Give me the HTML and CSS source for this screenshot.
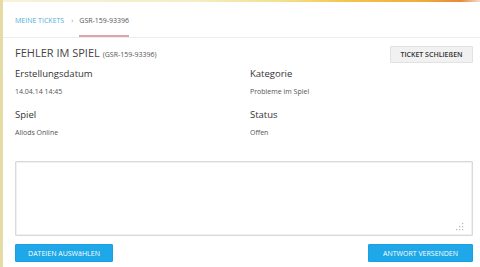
FILE: index.html
```html
<!DOCTYPE html>
<html lang="de">
<head>
<meta charset="utf-8">
<title>Ticket GSR-159-93396</title>
<link rel="stylesheet" href="styles.css">
</head>
<body>
<div class="page">
  <div class="topbar"></div>
  <nav class="crumbs">
    <a class="crumb link" href="#">MEINE TICKETS</a>
    <span class="sep">›</span>
    <span class="crumb current">GSR-159-93396</span>
  </nav>
  <div class="content">
    <div class="header">
      <h1 class="title">FEHLER IM SPIEL <small>(GSR-159-93396)</small></h1>
      <button class="btn btn-light">TICKET SCHLIEßEN</button>
    </div>
    <div class="fields">
      <div class="field">
        <div class="label">Erstellungsdatum</div>
        <div class="value">14.04.14 14:45</div>
      </div>
      <div class="field">
        <div class="label">Kategorie</div>
        <div class="value">Probleme im Spiel</div>
      </div>
      <div class="field">
        <div class="label">Spiel</div>
        <div class="value">Allods Online</div>
      </div>
      <div class="field">
        <div class="label">Status</div>
        <div class="value">Offen</div>
      </div>
    </div>
    <div class="reply">
      <textarea class="reply-input"></textarea>
      <svg class="grip" width="9" height="9" viewBox="0 0 9 9">
        <rect x="7" y="1" width="1.2" height="1.2" fill="#b5b5b5"/>
        <rect x="4" y="4" width="1.2" height="1.2" fill="#b5b5b5"/>
        <rect x="7" y="4" width="1.2" height="1.2" fill="#b5b5b5"/>
        <rect x="1" y="7" width="1.2" height="1.2" fill="#b5b5b5"/>
        <rect x="4" y="7" width="1.2" height="1.2" fill="#b5b5b5"/>
        <rect x="7" y="7" width="1.2" height="1.2" fill="#b5b5b5"/>
      </svg>
    </div>
    <div class="actions">
      <button class="btn btn-blue btn-files">DATEIEN AUSWäHLEN</button>
      <button class="btn btn-blue btn-send">ANTWORT VERSENDEN</button>
    </div>
  </div>
</div>
</body>
</html>
```

FILE: styles.css
```css
* { box-sizing: border-box; }
html, body { margin: 0; padding: 0; background: #fff; }
body {
  font-family: "Open Sans", "Liberation Sans", sans-serif;
  color: #333;
}
.page {
  border-left: 3px solid #e4dca4;
  min-height: 267px;
}
.topbar {
  height: 2px;
  background: linear-gradient(to right, #f7f2da 0%, #f4edc6 40%, #f2e18e 58%, #f3c54e 72%, #f0aa3c 88%, #e8893a 96%, #f3dccb 100%);
}
.crumbs {
  display: flex;
  align-items: stretch;
  padding: 0 12px;
  border-bottom: 1px solid #ededed;
  font-size: 7px;
  line-height: 10px;
}
.crumb {
  padding: 14px 0 9px;
  border-bottom: 2px solid transparent;
  text-decoration: none;
}
.crumb.link { color: #52aed8; }
.crumb.current { color: #555; border-bottom-color: #dfa3a8; }
.sep {
  padding: 14px 6px 9px 7px;
  color: #999;
}
.content {
  padding: 0 7px 0 12px;
}
.header {
  display: flex;
  justify-content: space-between;
  align-items: flex-start;
  margin-top: 7px;
}
.title {
  margin: 0;
  font-size: 11px;
  line-height: 15px;
  font-weight: 400;
  color: #444;
}
.title small {
  font-size: 7px;
  color: #555;
}
.btn {
  font-family: inherit;
  font-size: 7px;
  line-height: 15px;
  border: 1px solid transparent;
  border-radius: 1px;
  padding: 0 9px;
  cursor: pointer;
}
.btn-light {
  margin-top: 1px;
  height: 17px;
  width: 83px;
  padding: 0;
  background: #f1f1f1;
  border-color: #e2e2e2;
  color: #333;
  font-weight: 600;
}
.fields {
  display: grid;
  grid-template-columns: 235px 1fr;
  row-gap: 10.5px;
  margin-top: 4px;
}
.label {
  font-size: 9.5px;
  line-height: 14px;
  color: #333;
  margin-bottom: 4.5px;
}
.value {
  font-size: 7px;
  line-height: 12px;
  color: #555;
}
.reply {
  position: relative;
  margin-top: 22.5px;
  height: 75px;
}
.reply-input {
  display: block;
  width: 100%;
  height: 75px;
  border: 1px solid #d9d9d9;
  box-shadow: inset 0 0 0 1px #f0f0f0;
  border-radius: 1px;
  resize: none;
  outline: none;
  font-family: inherit;
}
.grip {
  position: absolute;
  right: 9px;
  bottom: 5px;
}
.actions {
  display: flex;
  justify-content: space-between;
  margin-top: 8px;
}
.btn-blue {
  height: 18px;
  background: #1ea8e9;
  border-color: #1a9fdf;
  color: #fff;
}
.btn-files { width: 98px; padding: 0; }
.btn-send { width: 105px; padding: 0; }
```
